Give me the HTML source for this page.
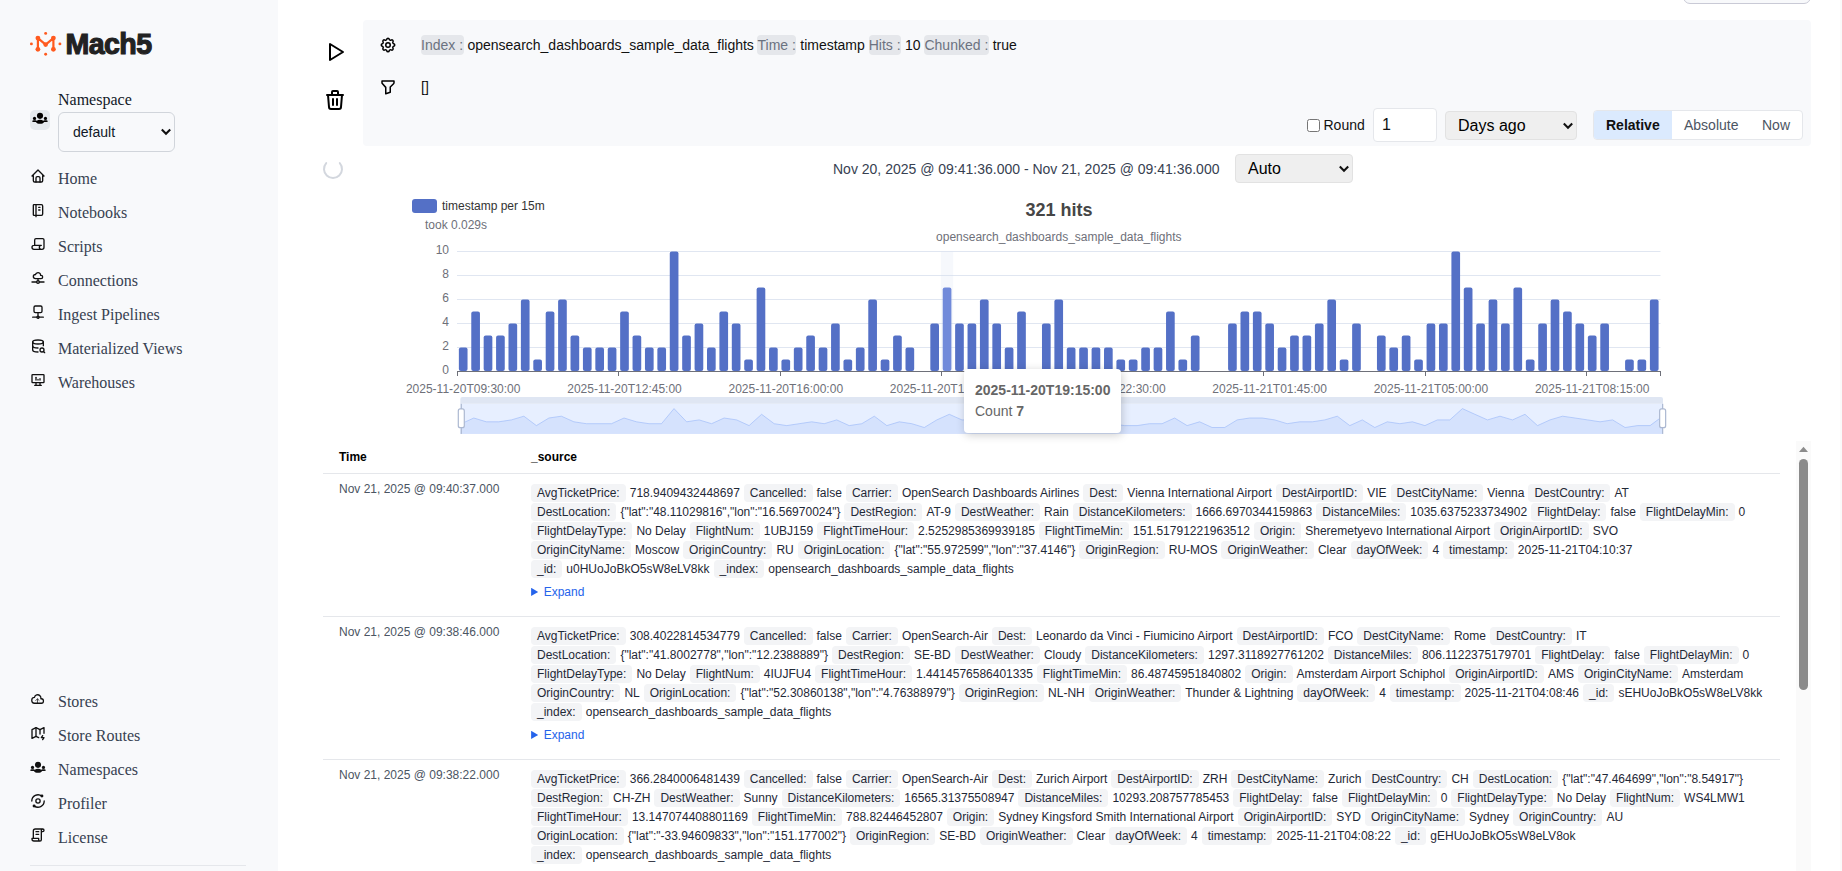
<!DOCTYPE html>
<html lang="en"><head><meta charset="utf-8"><title>Mach5</title>
<style>
*{box-sizing:border-box}
html,body{margin:0;padding:0}
body{width:1842px;height:871px;overflow:hidden;background:#fff;position:relative;font-family:"Liberation Sans",Arial,sans-serif;color:#111827}
.abs{position:absolute}
#side{position:absolute;left:0;top:0;width:278px;height:871px;background:#f8f9fb;font-family:"Liberation Serif","Times New Roman",serif;font-size:16px;color:#374151}
#side .nav{position:absolute;left:30px;height:20px;line-height:20px;white-space:nowrap}
#side .nav svg{position:absolute;left:0;top:-1px;color:#111}
#side .nav span{position:absolute;left:28px;top:0}
.sel{position:absolute;border:1px solid #d1d5db;border-radius:6px;font-family:"Liberation Sans",Arial,sans-serif;font-size:16px;color:#111827}
.nsel{position:absolute;background:#efefef;border-radius:4px;border:1px solid #e2e2e2;font-size:16px;color:#000}
.chev{position:absolute}
#qp{position:absolute;left:363px;top:20.200px;width:1448px;height:125.400px;background:#f8f9fb;border-radius:4px}
.qb{background:#e5e7eb;border-radius:4px;color:#6b7280;padding:2px 0.500px 2px 0}
.t14{font-size:14px}
.k{display:inline-block;background:#f3f4f6;border-radius:4px;padding:0 6px;height:17.600px;line-height:19.600px;margin-right:4px;vertical-align:top;margin-top:0}
.v{display:inline-block;margin-right:4px;height:19px;line-height:19px;vertical-align:top}
.ln{position:absolute;left:531px;height:19px;line-height:19px;white-space:nowrap;font-size:12px;color:#1f2937}
.tm{position:absolute;left:339px;font-size:12px;color:#4b5563;white-space:nowrap;height:14px;line-height:14px}
.hr{position:absolute;left:323px;width:1457px;height:1px;background:#e5e7eb}
.exp{position:absolute;left:531px;font-size:12px;color:#2563eb;height:14px;line-height:14px;white-space:nowrap}
.exp i{position:absolute;left:0.100px;top:2.800px;width:7.100px;height:8.300px;background:#2563eb;clip-path:polygon(0 0,100% 50%,0 100%)}
.exp span{position:absolute;left:12.700px;top:0}
</style></head><body>
<div id="side"><svg class="abs" style="left:28px;top:30px" width="36" height="28" viewBox="28 30 36 28">
<g stroke="#ff5a1f" stroke-width="2.2" stroke-linecap="round" stroke-linejoin="round" fill="none">
<path d="M37.900 49.300V38.100L45.650 44.600L53.400 38.100V49.300"/></g>
<g fill="#ff5a1f"><circle cx="37.900" cy="38.100" r="2.400"/><circle cx="53.400" cy="38.100" r="2.400"/><circle cx="37.900" cy="49.300" r="2.400"/><circle cx="53.400" cy="49.300" r="2.400"/><circle cx="45.650" cy="44.600" r="2.300"/>
<circle cx="45.650" cy="33.400" r="1.450"/><circle cx="45.650" cy="54.300" r="1.450"/><circle cx="31.400" cy="43.900" r="1.450"/><circle cx="59.900" cy="43.900" r="1.450"/></g></svg><div class="abs" style="left:65.400px;top:27.300px;height:34px;line-height:34px;font-family:'Liberation Sans',Arial,sans-serif;font-weight:700;font-size:28.600px;letter-spacing:-0.550px;color:#222;-webkit-text-stroke:1.100px #222;white-space:nowrap">Mach5</div><div class="abs" style="left:58px;top:90px;height:20px;line-height:20px;color:#111827">Namespace</div><div class="abs" style="left:30px;top:110px;width:20px;height:20px;border-radius:5px;background:#e4e9ee;color:#000"><div class="abs" style="left:2px;top:2px;width:16px;height:16px"><svg width="16" height="16" viewBox="0 0 24 24" fill="currentColor"><circle cx="12" cy="5.8" r="4.6"/><circle cx="3.8" cy="9.6" r="2.4"/><circle cx="20.2" cy="9.6" r="2.4"/><path d="M0.6 13.2c2.2-.9 4.4-.9 6.4 0c1.500-1 3.200-1.400 5-1.400s3.500.400 5 1.400c2-.9 4.200-.9 6.400 0c.5.200.5 1.300-.2 1.500c-1.700.5-3.300.5-4.900.3c-1.200 1.900-3.500 2.800-6.300 2.800s-5.100-.9-6.300-2.800c-1.600.2-3.200.2-4.900-.3c-.7-.2-.7-1.300-.2-1.500z"/></svg></div></div><div class="sel" style="left:58px;top:112px;width:117px;height:40px"><span class="abs" style="left:14px;top:10px;line-height:18px;font-size:14px">default</span><svg class="chev" style="left:101px;top:14.400px" width="12" height="10" viewBox="0 0 12 10"><path d="M1.800 2.500L6 6.700L10.200 2.500" fill="none" stroke="#111" stroke-width="2.100"/></svg></div><div class="nav" style="top:169px"><svg width="16" height="16" viewBox="0 0 24 24" fill="none" stroke="currentColor" stroke-width="2" stroke-linecap="round" stroke-linejoin="round" ><path d="M5 12l-2 0l9 -9l9 9l-2 0"/><path d="M5 12v7a2 2 0 0 0 2 2h10a2 2 0 0 0 2 -2v-7"/><path d="M9 21v-6a2 2 0 0 1 2 -2h2a2 2 0 0 1 2 2v6"/></svg><span>Home</span></div><div class="nav" style="top:203px"><svg width="16" height="16" viewBox="0 0 24 24" fill="none" stroke="currentColor" stroke-width="2" stroke-linecap="round" stroke-linejoin="round" ><path d="M6 4h11a2 2 0 0 1 2 2v12a2 2 0 0 1 -2 2h-11a1 1 0 0 1 -1 -1v-14a1 1 0 0 1 1 -1m3 0v18"/><path d="M13 8l2 0"/><path d="M13 12l2 0"/></svg><span>Notebooks</span></div><div class="nav" style="top:237px"><svg width="16" height="16" viewBox="0 0 24 24" fill="none" stroke="currentColor" stroke-width="2" stroke-linecap="round" stroke-linejoin="round" ><path d="M17 20h-11a3 3 0 0 1 0 -6h11a3 3 0 0 0 0 6h1a3 3 0 0 0 3 -3v-11a2 2 0 0 0 -2 -2h-10a2 2 0 0 0 -2 2v8"/></svg><span>Scripts</span></div><div class="nav" style="top:271px"><svg width="16" height="16" viewBox="0 0 24 24" fill="none" stroke="currentColor" stroke-width="2" stroke-linecap="round" stroke-linejoin="round" ><path d="M5 9.897c0 -1.714 1.46 -3.104 3.26 -3.104c.275 -1.22 1.255 -2.215 2.572 -2.611c1.317 -.397 2.77 -.134 3.811 .69c1.042 .822 1.514 2.08 1.239 3.3h.693a2.42 2.42 0 0 1 2.425 2.414a2.42 2.42 0 0 1 -2.425 2.414h-8.315c-1.8 0 -3.26 -1.39 -3.26 -3.103z"/><path d="M12 13v3"/><path d="M10 18a2 2 0 1 0 4 0a2 2 0 1 0 -4 0"/><path d="M14 18h7"/><path d="M3 18h7"/></svg><span>Connections</span></div><div class="nav" style="top:305px"><svg width="16" height="16" viewBox="0 0 24 24" fill="none" stroke="currentColor" stroke-width="2" stroke-linecap="round" stroke-linejoin="round" ><path d="M6 5a2 2 0 0 1 2 -2h8a2 2 0 0 1 2 2v6a2 2 0 0 1 -2 2h-8a2 2 0 0 1 -2 -2z"/><path d="M12 13v5"/><path d="M10.400 19.800a1.600 1.600 0 1 0 3.200 0a1.600 1.600 0 1 0 -3.200 0"/><path d="M13.600 19.800h6.400"/><path d="M4 19.800h6.400"/></svg><span>Ingest Pipelines</span></div><div class="nav" style="top:339px"><svg width="16" height="16" viewBox="0 0 24 24" fill="none" stroke="currentColor" stroke-width="2" stroke-linecap="round" stroke-linejoin="round" ><path d="M4 6c0 1.657 3.582 3 8 3s8 -1.343 8 -3s-3.582 -3 -8 -3s-8 1.343 -8 3"/><path d="M4 6v6c0 1.657 3.582 3 8 3m8 -3.5v-5.5"/><path d="M4 12v6c0 1.657 3.582 3 8 3"/><path d="M15 18a3 3 0 1 0 6 0a3 3 0 1 0 -6 0"/><path d="M20.2 20.2l1.8 1.8"/></svg><span>Materialized Views</span></div><div class="nav" style="top:373px"><svg width="16" height="16" viewBox="0 0 24 24" fill="none" stroke="currentColor" stroke-width="2" stroke-linecap="round" stroke-linejoin="round" ><path d="M3 5a1 1 0 0 1 1 -1h16a1 1 0 0 1 1 1v10a1 1 0 0 1 -1 1h-16a1 1 0 0 1 -1 -1z"/><path d="M7 20h10"/><path d="M9 16v4"/><path d="M15 16v4"/><path d="M9 12v-4"/><path d="M12 12v-1"/><path d="M15 12v-2"/></svg><span>Warehouses</span></div><div class="nav" style="top:692px"><svg width="16" height="16" viewBox="0 0 24 24" fill="none" stroke="currentColor" stroke-linecap="round" stroke-linejoin="round"><path stroke-width="2.150" transform="translate(0.84,0.76) scale(0.88,0.977)" d="M6.657 18c-2.572 0 -4.657 -2.007 -4.657 -4.483c0 -2.475 2.085 -4.482 4.657 -4.482c.393 -1.762 1.794 -3.200 3.675 -3.773c1.880 -.572 3.956 -.193 5.444 1c1.488 1.190 2.162 3.007 1.770 4.769h.990c1.913 0 3.464 1.560 3.464 3.486c0 1.927 -1.551 3.487 -3.465 3.487h-11.878z"/><path stroke-width="1.100" d="M11.200 17.800v-5.800M8.700 14.200l2.500 -2.500l2.500 2.500"/></svg><span>Stores</span></div><div class="nav" style="top:726px"><svg width="16" height="16" viewBox="0 0 24 24" fill="none" stroke="currentColor" stroke-width="2" stroke-linecap="round" stroke-linejoin="round" ><path d="M13 19l-4 -2l-6 3v-13l6 -3l6 3l6 -3v8.5"/><path d="M9 4v13"/><path d="M15 7v6.5"/><path d="M19 16l-2 3h4l-2 3"/></svg><span>Store Routes</span></div><div class="nav" style="top:760px"><svg style="top:1px" width="16" height="16" viewBox="0 0 24 24" fill="currentColor"><circle cx="12" cy="5.8" r="4.6"/><circle cx="3.8" cy="9.6" r="2.4"/><circle cx="20.2" cy="9.6" r="2.4"/><path d="M0.6 13.2c2.2-.9 4.4-.9 6.4 0c1.500-1 3.200-1.400 5-1.400s3.500.400 5 1.400c2-.9 4.200-.9 6.400 0c.5.200.5 1.300-.2 1.500c-1.700.5-3.300.5-4.900.3c-1.200 1.900-3.500 2.800-6.300 2.800s-5.100-.9-6.300-2.800c-1.600.2-3.200.2-4.900-.3c-.7-.2-.7-1.300-.2-1.500z"/></svg><span>Namespaces</span></div><div class="nav" style="top:794px"><svg width="16" height="16" viewBox="0 0 24 24" fill="none" stroke="currentColor" stroke-width="2" stroke-linecap="round" stroke-linejoin="round"><path d="M2.700 12A9.300 9.300 0 0 1 17.730 4.670"/><path d="M21.300 12A9.300 9.300 0 0 1 6.270 19.330"/><circle cx="12" cy="12" r="3.200"/><circle cx="17.900" cy="4.500" r="1.200" fill="currentColor"/><circle cx="6.100" cy="19.500" r="1.200" fill="currentColor"/></svg><span>Profiler</span></div><div class="nav" style="top:828px"><svg width="16" height="16" viewBox="0 0 24 24" fill="none" stroke="currentColor" stroke-width="2" stroke-linecap="round" stroke-linejoin="round" ><path d="M15 21h-9a3 3 0 0 1 -3 -3v-1h10v2a2 2 0 0 0 4 0v-14a2 2 0 1 1 2 2h-2m2 -4h-11a3 3 0 0 0 -3 3v11"/><path d="M9 7l4 0"/><path d="M9 11l4 0"/></svg><span>License</span></div><div class="abs" style="left:30px;top:865px;width:216px;height:1px;background:#e5e7eb"></div></div><div class="abs" style="left:1683px;top:-30px;width:128px;height:34px;border:1px solid #c9cad6;border-radius:7px;background:#f8f9fb"></div><div class="abs" style="left:1840px;top:0;width:2px;height:871px;background:#fafafa"></div><div class="abs" style="left:323px;top:40px;width:24px;height:24px;color:#000"><svg width="24" height="24" viewBox="0 0 24 24" fill="none" stroke="currentColor" stroke-width="2" stroke-linecap="round" stroke-linejoin="round" ><path d="M7 4v16l13 -8z"/></svg></div><div class="abs" style="left:323px;top:88px;width:24px;height:24px;color:#000"><svg width="24" height="24" viewBox="0 0 24 24" fill="none" stroke="currentColor" stroke-width="2" stroke-linecap="round" stroke-linejoin="round" ><path d="M4 7l16 0"/><path d="M10 11l0 6"/><path d="M14 11l0 6"/><path d="M5 7l1 12a2 2 0 0 0 2 2h8a2 2 0 0 0 2 -2l1 -12"/><path d="M9 7v-3a1 1 0 0 1 1 -1h4a1 1 0 0 1 1 1v3"/></svg></div><div id="qp"><div class="abs" style="left:16px;top:16px;width:18px;height:18px;color:#000"><svg width="18" height="18" viewBox="0 0 24 24" fill="none" stroke="currentColor" stroke-width="2" stroke-linecap="round" stroke-linejoin="round" ><path d="M10.325 4.317c.426 -1.756 2.924 -1.756 3.35 0a1.724 1.724 0 0 0 2.573 1.066c1.543 -.94 3.31 .826 2.37 2.37a1.724 1.724 0 0 0 1.065 2.572c1.756 .426 1.756 2.924 0 3.35a1.724 1.724 0 0 0 -1.066 2.573c.94 1.543 -.826 3.31 -2.37 2.37a1.724 1.724 0 0 0 -2.572 1.065c-.426 1.756 -2.924 1.756 -3.35 0a1.724 1.724 0 0 0 -2.573 -1.066c-1.543 .94 -3.31 -.826 -2.37 -2.37a1.724 1.724 0 0 0 -1.065 -2.572c-1.756 -.426 -1.756 -2.924 0 -3.35a1.724 1.724 0 0 0 1.066 -2.573c-.94 -1.543 .826 -3.31 2.37 -2.37c1 .608 2.296 .07 2.572 -1.065z"/><path d="M9 12a3 3 0 1 0 6 0a3 3 0 0 0 -6 0"/></svg></div><div class="abs" style="left:16px;top:58px;width:18px;height:18px;color:#000"><svg width="18" height="18" viewBox="0 0 24 24" fill="none" stroke="currentColor" stroke-width="2" stroke-linecap="round" stroke-linejoin="round" ><path d="M4 4h16v2.172a2 2 0 0 1 -.586 1.414l-4.414 4.414v7l-6 2v-8.5l-4.586 -5.045a2 2 0 0 1 -.414 -1.218v-2.237z"/></svg></div><div class="abs t14" style="left:58px;top:15px;height:20px;line-height:20px;white-space:nowrap;color:#111"><span class="qb">Index :</span> opensearch_dashboards_sample_data_flights <span class="qb">Time :</span> timestamp <span class="qb">Hits :</span> 10 <span class="qb">Chunked :</span> true</div><div class="abs t14" style="left:58px;top:57px;height:20px;line-height:20px;color:#111">[]</div><div class="abs" style="left:944px;top:99px;width:13px;height:13px;border:1px solid #767676;border-radius:2.500px;background:#fff"></div><div class="abs t14" style="left:960.500px;top:95px;height:20px;line-height:20px;color:#111">Round</div><div class="abs" style="left:1010px;top:88px;width:64px;height:34px;border:1px solid #e5e7eb;border-radius:4px;background:#fff"><span class="abs" style="left:8px;top:6px;font-size:16px;line-height:20px;color:#111">1</span></div><div class="nsel" style="left:1082px;top:91px;width:132px;height:29px"><span class="abs" style="left:12px;top:4px;line-height:20px">Days ago</span><svg class="chev" style="left:116px;top:9px" width="12" height="10" viewBox="0 0 12 10"><path d="M1.800 2.500L6 6.700L10.200 2.500" fill="none" stroke="#111" stroke-width="2.050"/></svg></div><div class="abs t14" style="left:1230px;top:90px;width:210px;height:30px;border:1px solid #e5e7eb;border-radius:4px;background:#fff;overflow:hidden"><div class="abs" style="left:0;top:0;width:78px;height:28px;background:#dbeafe"></div><span class="abs" style="left:12px;top:4px;line-height:20px;font-weight:700;color:#111">Relative</span><span class="abs" style="left:90px;top:4px;line-height:20px;color:#4b5563">Absolute</span><span class="abs" style="left:168px;top:4px;line-height:20px;color:#4b5563">Now</span></div></div><svg class="abs" style="left:313px;top:149px" width="40" height="40" viewBox="313 149 40 40"><path d="M326.210 163.100A9 9 0 1 0 339.790 163.100" fill="none" stroke="#d3d7de" stroke-width="2" stroke-linecap="round"/></svg><div class="abs t14" style="left:833px;top:159px;height:20px;line-height:20px;white-space:nowrap;color:#374151">Nov 20, 2025 @ 09:41:36.000 - Nov 21, 2025 @ 09:41:36.000</div><div class="nsel" style="left:1235px;top:154px;width:118px;height:29px"><span class="abs" style="left:12px;top:4px;line-height:20px">Auto</span><svg class="chev" style="left:102px;top:9px" width="12" height="10" viewBox="0 0 12 10"><path d="M1.800 2.500L6 6.700L10.200 2.500" fill="none" stroke="#111" stroke-width="2.050"/></svg></div><svg class="abs" style="left:0;top:0" width="1842" height="460" viewBox="0 0 1842 460" font-family="Liberation Sans, Arial, sans-serif"><rect x="412" y="199" width="25" height="14" rx="3" fill="#5470c6"/><text x="442" y="210" font-size="12" fill="#333">timestamp per 15m</text><text x="425" y="229" font-size="12" fill="#6E7079">took 0.029s</text><text x="1059.100" y="216" font-size="18" font-weight="700" fill="#464646" text-anchor="middle">321 hits</text><text x="1058.800" y="241" font-size="12" fill="#6E7079" text-anchor="middle">opensearch_dashboards_sample_data_flights</text><rect x="457.0" y="347.0" width="1203.5" height="1" fill="#E0E6F1"/><rect x="457.0" y="323.0" width="1203.5" height="1" fill="#E0E6F1"/><rect x="457.0" y="299.0" width="1203.5" height="1" fill="#E0E6F1"/><rect x="457.0" y="275.0" width="1203.5" height="1" fill="#E0E6F1"/><rect x="457.0" y="251.0" width="1203.5" height="1" fill="#E0E6F1"/><text x="449" y="373.7" font-size="12" fill="#6E7079" text-anchor="end">0</text><text x="449" y="349.7" font-size="12" fill="#6E7079" text-anchor="end">2</text><text x="449" y="325.7" font-size="12" fill="#6E7079" text-anchor="end">4</text><text x="449" y="301.7" font-size="12" fill="#6E7079" text-anchor="end">6</text><text x="449" y="277.7" font-size="12" fill="#6E7079" text-anchor="end">8</text><text x="449" y="253.7" font-size="12" fill="#6E7079" text-anchor="end">10</text><rect x="940.86" y="251.5" width="12.41" height="120.0" fill="rgba(210,219,238,0.2)"/><rect x="458.86" y="347.50" width="8.68" height="23.50" rx="2" fill="#5470c6"/><rect x="471.27" y="311.50" width="8.68" height="59.50" rx="2" fill="#5470c6"/><rect x="483.67" y="335.50" width="8.68" height="35.50" rx="2" fill="#5470c6"/><rect x="496.08" y="335.50" width="8.68" height="35.50" rx="2" fill="#5470c6"/><rect x="508.49" y="323.50" width="8.68" height="47.50" rx="2" fill="#5470c6"/><rect x="520.89" y="299.50" width="8.68" height="71.50" rx="2" fill="#5470c6"/><rect x="533.30" y="359.50" width="8.68" height="11.50" rx="2" fill="#5470c6"/><rect x="545.71" y="311.50" width="8.68" height="59.50" rx="2" fill="#5470c6"/><rect x="558.11" y="299.50" width="8.68" height="71.50" rx="2" fill="#5470c6"/><rect x="570.52" y="335.50" width="8.68" height="35.50" rx="2" fill="#5470c6"/><rect x="582.93" y="347.50" width="8.68" height="23.50" rx="2" fill="#5470c6"/><rect x="595.33" y="347.50" width="8.68" height="23.50" rx="2" fill="#5470c6"/><rect x="607.74" y="347.50" width="8.68" height="23.50" rx="2" fill="#5470c6"/><rect x="620.15" y="311.50" width="8.68" height="59.50" rx="2" fill="#5470c6"/><rect x="632.55" y="335.50" width="8.68" height="35.50" rx="2" fill="#5470c6"/><rect x="644.96" y="347.50" width="8.68" height="23.50" rx="2" fill="#5470c6"/><rect x="657.37" y="347.50" width="8.68" height="23.50" rx="2" fill="#5470c6"/><rect x="669.77" y="251.50" width="8.68" height="119.50" rx="2" fill="#5470c6"/><rect x="682.18" y="335.50" width="8.68" height="35.50" rx="2" fill="#5470c6"/><rect x="694.59" y="323.50" width="8.68" height="47.50" rx="2" fill="#5470c6"/><rect x="707.00" y="347.50" width="8.68" height="23.50" rx="2" fill="#5470c6"/><rect x="719.40" y="311.50" width="8.68" height="59.50" rx="2" fill="#5470c6"/><rect x="731.81" y="323.50" width="8.68" height="47.50" rx="2" fill="#5470c6"/><rect x="744.22" y="359.50" width="8.68" height="11.50" rx="2" fill="#5470c6"/><rect x="756.62" y="287.50" width="8.68" height="83.50" rx="2" fill="#5470c6"/><rect x="769.03" y="347.50" width="8.68" height="23.50" rx="2" fill="#5470c6"/><rect x="781.44" y="359.50" width="8.68" height="11.50" rx="2" fill="#5470c6"/><rect x="793.84" y="347.50" width="8.68" height="23.50" rx="2" fill="#5470c6"/><rect x="806.25" y="335.50" width="8.68" height="35.50" rx="2" fill="#5470c6"/><rect x="818.66" y="347.50" width="8.68" height="23.50" rx="2" fill="#5470c6"/><rect x="831.06" y="323.50" width="8.68" height="47.50" rx="2" fill="#5470c6"/><rect x="843.47" y="359.50" width="8.68" height="11.50" rx="2" fill="#5470c6"/><rect x="855.88" y="347.50" width="8.68" height="23.50" rx="2" fill="#5470c6"/><rect x="868.28" y="299.50" width="8.68" height="71.50" rx="2" fill="#5470c6"/><rect x="880.69" y="359.50" width="8.68" height="11.50" rx="2" fill="#5470c6"/><rect x="893.10" y="335.50" width="8.68" height="35.50" rx="2" fill="#5470c6"/><rect x="905.50" y="347.50" width="8.68" height="23.50" rx="2" fill="#5470c6"/><rect x="930.32" y="323.50" width="8.68" height="47.50" rx="2" fill="#5470c6"/><rect x="942.72" y="287.50" width="8.68" height="83.50" rx="2" fill="#718ada"/><rect x="955.13" y="323.50" width="8.68" height="47.50" rx="2" fill="#5470c6"/><rect x="967.54" y="323.50" width="8.68" height="47.50" rx="2" fill="#5470c6"/><rect x="979.94" y="299.50" width="8.68" height="71.50" rx="2" fill="#5470c6"/><rect x="992.35" y="323.50" width="8.68" height="47.50" rx="2" fill="#5470c6"/><rect x="1004.76" y="347.50" width="8.68" height="23.50" rx="2" fill="#5470c6"/><rect x="1017.16" y="311.50" width="8.68" height="59.50" rx="2" fill="#5470c6"/><rect x="1041.98" y="323.50" width="8.68" height="47.50" rx="2" fill="#5470c6"/><rect x="1054.38" y="299.50" width="8.68" height="71.50" rx="2" fill="#5470c6"/><rect x="1066.79" y="347.50" width="8.68" height="23.50" rx="2" fill="#5470c6"/><rect x="1079.20" y="347.50" width="8.68" height="23.50" rx="2" fill="#5470c6"/><rect x="1091.60" y="347.50" width="8.68" height="23.50" rx="2" fill="#5470c6"/><rect x="1104.01" y="347.50" width="8.68" height="23.50" rx="2" fill="#5470c6"/><rect x="1116.42" y="359.50" width="8.68" height="11.50" rx="2" fill="#5470c6"/><rect x="1128.82" y="359.50" width="8.68" height="11.50" rx="2" fill="#5470c6"/><rect x="1141.23" y="347.50" width="8.68" height="23.50" rx="2" fill="#5470c6"/><rect x="1153.64" y="347.50" width="8.68" height="23.50" rx="2" fill="#5470c6"/><rect x="1166.04" y="311.50" width="8.68" height="59.50" rx="2" fill="#5470c6"/><rect x="1178.45" y="359.50" width="8.68" height="11.50" rx="2" fill="#5470c6"/><rect x="1190.86" y="335.50" width="8.68" height="35.50" rx="2" fill="#5470c6"/><rect x="1228.08" y="323.50" width="8.68" height="47.50" rx="2" fill="#5470c6"/><rect x="1240.48" y="311.50" width="8.68" height="59.50" rx="2" fill="#5470c6"/><rect x="1252.89" y="311.50" width="8.68" height="59.50" rx="2" fill="#5470c6"/><rect x="1265.30" y="323.50" width="8.68" height="47.50" rx="2" fill="#5470c6"/><rect x="1277.70" y="347.50" width="8.68" height="23.50" rx="2" fill="#5470c6"/><rect x="1290.11" y="335.50" width="8.68" height="35.50" rx="2" fill="#5470c6"/><rect x="1302.52" y="335.50" width="8.68" height="35.50" rx="2" fill="#5470c6"/><rect x="1314.92" y="323.50" width="8.68" height="47.50" rx="2" fill="#5470c6"/><rect x="1327.33" y="299.50" width="8.68" height="71.50" rx="2" fill="#5470c6"/><rect x="1339.74" y="359.50" width="8.68" height="11.50" rx="2" fill="#5470c6"/><rect x="1352.14" y="323.50" width="8.68" height="47.50" rx="2" fill="#5470c6"/><rect x="1376.96" y="335.50" width="8.68" height="35.50" rx="2" fill="#5470c6"/><rect x="1389.36" y="347.50" width="8.68" height="23.50" rx="2" fill="#5470c6"/><rect x="1401.77" y="335.50" width="8.68" height="35.50" rx="2" fill="#5470c6"/><rect x="1414.18" y="359.50" width="8.68" height="11.50" rx="2" fill="#5470c6"/><rect x="1426.58" y="323.50" width="8.68" height="47.50" rx="2" fill="#5470c6"/><rect x="1438.99" y="323.50" width="8.68" height="47.50" rx="2" fill="#5470c6"/><rect x="1451.40" y="251.50" width="8.68" height="119.50" rx="2" fill="#5470c6"/><rect x="1463.80" y="287.50" width="8.68" height="83.50" rx="2" fill="#5470c6"/><rect x="1476.21" y="323.50" width="8.68" height="47.50" rx="2" fill="#5470c6"/><rect x="1488.62" y="299.50" width="8.68" height="71.50" rx="2" fill="#5470c6"/><rect x="1501.02" y="323.50" width="8.68" height="47.50" rx="2" fill="#5470c6"/><rect x="1513.43" y="287.50" width="8.68" height="83.50" rx="2" fill="#5470c6"/><rect x="1525.84" y="359.50" width="8.68" height="11.50" rx="2" fill="#5470c6"/><rect x="1538.24" y="323.50" width="8.68" height="47.50" rx="2" fill="#5470c6"/><rect x="1550.65" y="299.50" width="8.68" height="71.50" rx="2" fill="#5470c6"/><rect x="1563.06" y="311.50" width="8.68" height="59.50" rx="2" fill="#5470c6"/><rect x="1575.46" y="323.50" width="8.68" height="47.50" rx="2" fill="#5470c6"/><rect x="1587.87" y="335.50" width="8.68" height="35.50" rx="2" fill="#5470c6"/><rect x="1600.28" y="323.50" width="8.68" height="47.50" rx="2" fill="#5470c6"/><rect x="1625.09" y="359.50" width="8.68" height="11.50" rx="2" fill="#5470c6"/><rect x="1637.50" y="359.50" width="8.68" height="11.50" rx="2" fill="#5470c6"/><rect x="1649.90" y="299.50" width="8.68" height="71.50" rx="2" fill="#5470c6"/><rect x="457.0" y="371" width="1204.0" height="1" fill="#6E7079"/><rect x="457" y="371" width="1" height="5" fill="#6E7079"/><rect x="618" y="371" width="1" height="5" fill="#6E7079"/><rect x="780" y="371" width="1" height="5" fill="#6E7079"/><rect x="941" y="371" width="1" height="5" fill="#6E7079"/><rect x="1102" y="371" width="1" height="5" fill="#6E7079"/><rect x="1263" y="371" width="1" height="5" fill="#6E7079"/><rect x="1425" y="371" width="1" height="5" fill="#6E7079"/><rect x="1586" y="371" width="1" height="5" fill="#6E7079"/><rect x="1660" y="371" width="1" height="5" fill="#6E7079"/><text x="463.2" y="393" font-size="12" fill="#6E7079" text-anchor="middle">2025-11-20T09:30:00</text><text x="624.5" y="393" font-size="12" fill="#6E7079" text-anchor="middle">2025-11-20T12:45:00</text><text x="785.8" y="393" font-size="12" fill="#6E7079" text-anchor="middle">2025-11-20T16:00:00</text><text x="947.1" y="393" font-size="12" fill="#6E7079" text-anchor="middle">2025-11-20T19:15:00</text><text x="1108.4" y="393" font-size="12" fill="#6E7079" text-anchor="middle">2025-11-20T22:30:00</text><text x="1269.6" y="393" font-size="12" fill="#6E7079" text-anchor="middle">2025-11-21T01:45:00</text><text x="1430.9" y="393" font-size="12" fill="#6E7079" text-anchor="middle">2025-11-21T05:00:00</text><text x="1592.2" y="393" font-size="12" fill="#6E7079" text-anchor="middle">2025-11-21T08:15:00</text><rect x="460.3" y="403.8" width="1202.7" height="30.1" fill="rgba(135,175,255,0.2)"/><path d="M460.3,433.9 L461.3,423.7 L473.8,418.0 L486.3,421.8 L498.8,421.8 L511.4,419.9 L523.9,416.2 L536.4,425.6 L548.9,418.0 L561.4,416.2 L573.9,421.8 L586.4,423.7 L599.0,423.7 L611.5,423.7 L624.0,418.0 L636.5,421.8 L649.0,423.7 L661.5,423.7 L674.0,408.6 L686.6,421.8 L699.1,419.9 L711.6,423.7 L724.1,418.0 L736.6,419.9 L749.1,425.6 L761.6,414.3 L774.2,423.7 L786.7,425.6 L799.2,423.7 L811.7,421.8 L824.2,423.7 L836.7,419.9 L849.2,425.6 L861.8,423.7 L874.3,416.2 L886.8,425.6 L899.3,421.8 L911.8,423.7 L924.3,427.5 L936.8,419.9 L949.3,414.3 L961.9,419.9 L974.4,419.9 L986.9,416.2 L999.4,419.9 L1011.9,423.7 L1024.4,418.0 L1036.9,427.5 L1049.5,419.9 L1062.0,416.2 L1074.5,423.7 L1087.0,423.7 L1099.5,423.7 L1112.0,423.7 L1124.5,425.6 L1137.1,425.6 L1149.6,423.7 L1162.1,423.7 L1174.6,418.0 L1187.1,425.6 L1199.6,421.8 L1212.1,427.5 L1224.7,427.5 L1237.2,419.9 L1249.7,418.0 L1262.2,418.0 L1274.7,419.9 L1287.2,423.7 L1299.7,421.8 L1312.3,421.8 L1324.8,419.9 L1337.3,416.2 L1349.8,425.6 L1362.3,419.9 L1374.8,427.5 L1387.3,421.8 L1399.9,423.7 L1412.4,421.8 L1424.9,425.6 L1437.4,419.9 L1449.9,419.9 L1462.4,408.6 L1474.9,414.3 L1487.5,419.9 L1500.0,416.2 L1512.5,419.9 L1525.0,414.3 L1537.5,425.6 L1550.0,419.9 L1562.5,416.2 L1575.1,418.0 L1587.6,419.9 L1600.1,421.8 L1612.6,419.9 L1625.1,427.5 L1637.6,425.6 L1650.1,425.6 L1662.7,416.2 L1663.0,433.9 Z" fill="#8fb0f7" fill-opacity="0.2"/><polyline points="461.3,423.7 473.8,418.0 486.3,421.8 498.8,421.8 511.4,419.9 523.9,416.2 536.4,425.6 548.9,418.0 561.4,416.2 573.9,421.8 586.4,423.7 599.0,423.7 611.5,423.7 624.0,418.0 636.5,421.8 649.0,423.7 661.5,423.7 674.0,408.6 686.6,421.8 699.1,419.9 711.6,423.7 724.1,418.0 736.6,419.9 749.1,425.6 761.6,414.3 774.2,423.7 786.7,425.6 799.2,423.7 811.7,421.8 824.2,423.7 836.7,419.9 849.2,425.6 861.8,423.7 874.3,416.2 886.8,425.6 899.3,421.8 911.8,423.7 924.3,427.5 936.8,419.9 949.3,414.3 961.9,419.9 974.4,419.9 986.9,416.2 999.4,419.9 1011.9,423.7 1024.4,418.0 1036.9,427.5 1049.5,419.9 1062.0,416.2 1074.5,423.7 1087.0,423.7 1099.5,423.7 1112.0,423.7 1124.5,425.6 1137.1,425.6 1149.6,423.7 1162.1,423.7 1174.6,418.0 1187.1,425.6 1199.6,421.8 1212.1,427.5 1224.7,427.5 1237.2,419.9 1249.7,418.0 1262.2,418.0 1274.7,419.9 1287.2,423.7 1299.7,421.8 1312.3,421.8 1324.8,419.9 1337.3,416.2 1349.8,425.6 1362.3,419.9 1374.8,427.5 1387.3,421.8 1399.9,423.7 1412.4,421.8 1424.9,425.6 1437.4,419.9 1449.9,419.9 1462.4,408.6 1474.9,414.3 1487.5,419.9 1500.0,416.2 1512.5,419.9 1525.0,414.3 1537.5,425.6 1550.0,419.9 1562.5,416.2 1575.1,418.0 1587.6,419.9 1600.1,421.8 1612.6,419.9 1625.1,427.5 1637.6,425.6 1650.1,425.6 1662.7,416.2" fill="none" stroke="#8fb0f7" stroke-width="0.600" stroke-opacity="0.900"/><path d="M460.3,403.8 v-4.9 a2,2 0 0 1 2,-2 h1198.7 a2,2 0 0 1 2,2 v4.9 z" fill="#D2DBEE" fill-opacity="0.700"/><rect x="460.70" y="403.8" width="1.200" height="30.1" fill="#ACB8D1"/><rect x="458.30" y="408.90" width="6" height="18.800" rx="2" fill="#fff" stroke="#ACB8D1" stroke-width="1.200"/><rect x="1662.05" y="403.8" width="1.200" height="30.1" fill="#ACB8D1"/><rect x="1659.65" y="408.90" width="6" height="18.800" rx="2" fill="#fff" stroke="#ACB8D1" stroke-width="1.200"/></svg><div class="abs" style="left:964px;top:369px;width:157px;height:64px;background:#fff;border-radius:4px;box-shadow:1px 2px 10px rgba(0,0,0,0.2);font-size:14px;color:#666;white-space:nowrap"><div class="abs" style="left:11px;top:10.500px;height:21px;line-height:21px;font-weight:700">2025-11-20T19:15:00</div><div class="abs" style="left:11px;top:31.500px;height:21px;line-height:21px">Count <b>7</b></div></div><div class="abs" style="left:339px;top:450px;font-size:12px;font-weight:700;height:14px;line-height:14px;color:#000">Time</div><div class="abs" style="left:531px;top:450px;font-size:12px;font-weight:700;height:14px;line-height:14px;color:#000">_source</div><div class="hr" style="top:473px"></div><div class="tm" style="top:482px">Nov 21, 2025 @ 09:40:37.000</div><div class="ln" style="top:484px"><span class="k">AvgTicketPrice:</span><span class="v">718.9409432448697</span><span class="k">Cancelled:</span><span class="v">false</span><span class="k">Carrier:</span><span class="v">OpenSearch Dashboards Airlines</span><span class="k">Dest:</span><span class="v">Vienna International Airport</span><span class="k">DestAirportID:</span><span class="v">VIE</span><span class="k">DestCityName:</span><span class="v">Vienna</span><span class="k">DestCountry:</span><span class="v">AT</span></div><div class="ln" style="top:503px"><span class="k">DestLocation:</span><span class="v">{"lat":"48.11029816","lon":"16.56970024"}</span><span class="k">DestRegion:</span><span class="v">AT-9</span><span class="k">DestWeather:</span><span class="v">Rain</span><span class="k">DistanceKilometers:</span><span class="v">1666.6970344159863</span><span class="k">DistanceMiles:</span><span class="v">1035.6375233734902</span><span class="k">FlightDelay:</span><span class="v">false</span><span class="k">FlightDelayMin:</span><span class="v">0</span></div><div class="ln" style="top:522px"><span class="k">FlightDelayType:</span><span class="v">No Delay</span><span class="k">FlightNum:</span><span class="v">1UBJ159</span><span class="k">FlightTimeHour:</span><span class="v">2.5252985369939185</span><span class="k">FlightTimeMin:</span><span class="v">151.51791221963512</span><span class="k">Origin:</span><span class="v">Sheremetyevo International Airport</span><span class="k">OriginAirportID:</span><span class="v">SVO</span></div><div class="ln" style="top:541px"><span class="k">OriginCityName:</span><span class="v">Moscow</span><span class="k">OriginCountry:</span><span class="v">RU</span><span class="k">OriginLocation:</span><span class="v">{"lat":"55.972599","lon":"37.4146"}</span><span class="k">OriginRegion:</span><span class="v">RU-MOS</span><span class="k">OriginWeather:</span><span class="v">Clear</span><span class="k">dayOfWeek:</span><span class="v">4</span><span class="k">timestamp:</span><span class="v">2025-11-21T04:10:37</span></div><div class="ln" style="top:560px"><span class="k">_id:</span><span class="v">u0HUoJoBkO5sW8eLV8kk</span><span class="k">_index:</span><span class="v">opensearch_dashboards_sample_data_flights</span></div><div class="exp" style="top:585px"><i></i><span>Expand</span></div><div class="hr" style="top:616px"></div><div class="tm" style="top:625px">Nov 21, 2025 @ 09:38:46.000</div><div class="ln" style="top:627px"><span class="k">AvgTicketPrice:</span><span class="v">308.4022814534779</span><span class="k">Cancelled:</span><span class="v">false</span><span class="k">Carrier:</span><span class="v">OpenSearch-Air</span><span class="k">Dest:</span><span class="v">Leonardo da Vinci - Fiumicino Airport</span><span class="k">DestAirportID:</span><span class="v">FCO</span><span class="k">DestCityName:</span><span class="v">Rome</span><span class="k">DestCountry:</span><span class="v">IT</span></div><div class="ln" style="top:646px"><span class="k">DestLocation:</span><span class="v">{"lat":"41.8002778","lon":"12.2388889"}</span><span class="k">DestRegion:</span><span class="v">SE-BD</span><span class="k">DestWeather:</span><span class="v">Cloudy</span><span class="k">DistanceKilometers:</span><span class="v">1297.3118927761202</span><span class="k">DistanceMiles:</span><span class="v">806.1122375179701</span><span class="k">FlightDelay:</span><span class="v">false</span><span class="k">FlightDelayMin:</span><span class="v">0</span></div><div class="ln" style="top:665px"><span class="k">FlightDelayType:</span><span class="v">No Delay</span><span class="k">FlightNum:</span><span class="v">4IUJFU4</span><span class="k">FlightTimeHour:</span><span class="v">1.4414576586401335</span><span class="k">FlightTimeMin:</span><span class="v">86.48745951840802</span><span class="k">Origin:</span><span class="v">Amsterdam Airport Schiphol</span><span class="k">OriginAirportID:</span><span class="v">AMS</span><span class="k">OriginCityName:</span><span class="v">Amsterdam</span></div><div class="ln" style="top:684px"><span class="k">OriginCountry:</span><span class="v">NL</span><span class="k">OriginLocation:</span><span class="v">{"lat":"52.30860138","lon":"4.76388979"}</span><span class="k">OriginRegion:</span><span class="v">NL-NH</span><span class="k">OriginWeather:</span><span class="v">Thunder &amp; Lightning</span><span class="k">dayOfWeek:</span><span class="v">4</span><span class="k">timestamp:</span><span class="v">2025-11-21T04:08:46</span><span class="k">_id:</span><span class="v">sEHUoJoBkO5sW8eLV8kk</span></div><div class="ln" style="top:703px"><span class="k">_index:</span><span class="v">opensearch_dashboards_sample_data_flights</span></div><div class="exp" style="top:728px"><i></i><span>Expand</span></div><div class="hr" style="top:759px"></div><div class="tm" style="top:768px">Nov 21, 2025 @ 09:38:22.000</div><div class="ln" style="top:770px"><span class="k">AvgTicketPrice:</span><span class="v">366.2840006481439</span><span class="k">Cancelled:</span><span class="v">false</span><span class="k">Carrier:</span><span class="v">OpenSearch-Air</span><span class="k">Dest:</span><span class="v">Zurich Airport</span><span class="k">DestAirportID:</span><span class="v">ZRH</span><span class="k">DestCityName:</span><span class="v">Zurich</span><span class="k">DestCountry:</span><span class="v">CH</span><span class="k">DestLocation:</span><span class="v">{"lat":"47.464699","lon":"8.54917"}</span></div><div class="ln" style="top:789px"><span class="k">DestRegion:</span><span class="v">CH-ZH</span><span class="k">DestWeather:</span><span class="v">Sunny</span><span class="k">DistanceKilometers:</span><span class="v">16565.31375508947</span><span class="k">DistanceMiles:</span><span class="v">10293.208757785453</span><span class="k">FlightDelay:</span><span class="v">false</span><span class="k">FlightDelayMin:</span><span class="v">0</span><span class="k">FlightDelayType:</span><span class="v">No Delay</span><span class="k">FlightNum:</span><span class="v">WS4LMW1</span></div><div class="ln" style="top:808px"><span class="k">FlightTimeHour:</span><span class="v">13.147074408801169</span><span class="k">FlightTimeMin:</span><span class="v">788.82446452807</span><span class="k">Origin:</span><span class="v">Sydney Kingsford Smith International Airport</span><span class="k">OriginAirportID:</span><span class="v">SYD</span><span class="k">OriginCityName:</span><span class="v">Sydney</span><span class="k">OriginCountry:</span><span class="v">AU</span></div><div class="ln" style="top:827px"><span class="k">OriginLocation:</span><span class="v">{"lat":"-33.94609833","lon":"151.177002"}</span><span class="k">OriginRegion:</span><span class="v">SE-BD</span><span class="k">OriginWeather:</span><span class="v">Clear</span><span class="k">dayOfWeek:</span><span class="v">4</span><span class="k">timestamp:</span><span class="v">2025-11-21T04:08:22</span><span class="k">_id:</span><span class="v">gEHUoJoBkO5sW8eLV8ok</span></div><div class="ln" style="top:846px"><span class="k">_index:</span><span class="v">opensearch_dashboards_sample_data_flights</span></div><div class="exp" style="top:871px"><i></i><span>Expand</span></div><div class="abs" style="left:1796px;top:441px;width:15px;height:430px;background:#fafafa"></div><svg class="abs" style="left:1796px;top:441px" width="15" height="16" viewBox="0 0 15 16"><path d="M3 11L7.500 5.800L12 11Z" fill="#8b8b8b"/></svg><div class="abs" style="left:1799px;top:459px;width:9px;height:231px;border-radius:4.500px;background:#8b8b8b"></div></body></html>
